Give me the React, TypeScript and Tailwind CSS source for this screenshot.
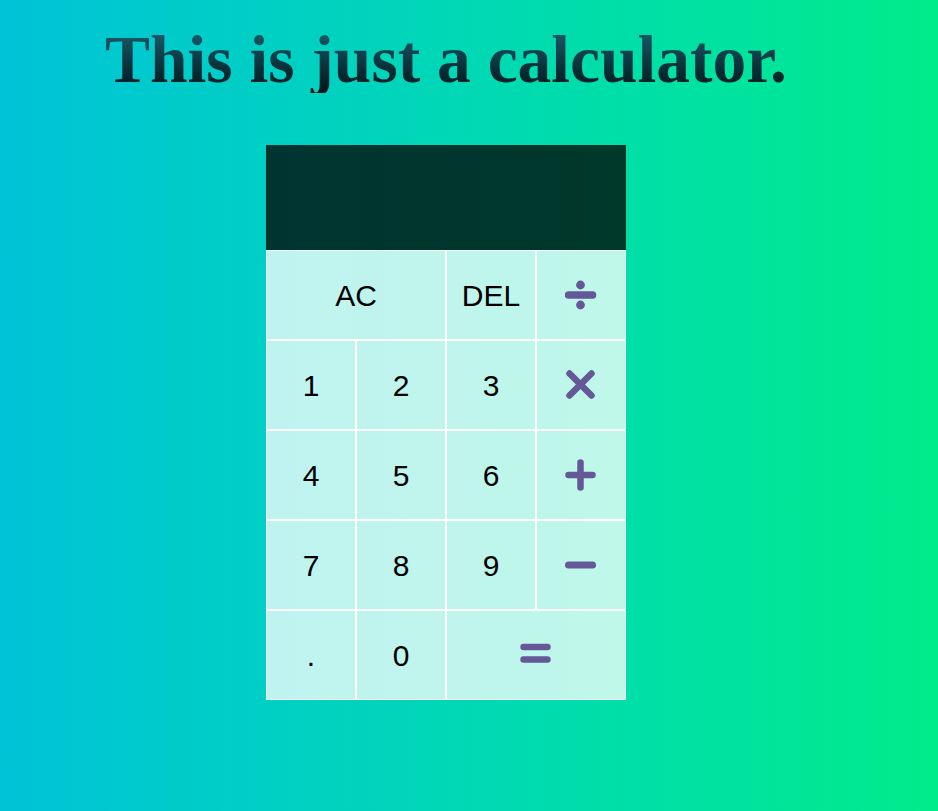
import React from "react";

const ICON = "#655897";

function Divide() {
  return (
    <svg width="32" height="32" viewBox="0 0 32 32">
      <circle cx="15.5" cy="6" r="4.4" fill={ICON} />
      <line x1="3.5" y1="16" x2="27.5" y2="16" stroke={ICON} strokeWidth="7.5" strokeLinecap="round" />
      <circle cx="15.5" cy="26" r="4.4" fill={ICON} />
    </svg>
  );
}
function Times() {
  return (
    <svg width="32" height="32" viewBox="0 0 32 32">
      <line x1="4.5" y1="4.5" x2="26.5" y2="26.5" stroke={ICON} strokeWidth="6.5" strokeLinecap="round" />
      <line x1="26.5" y1="4.5" x2="4.5" y2="26.5" stroke={ICON} strokeWidth="6.5" strokeLinecap="round" />
    </svg>
  );
}
function Plus() {
  return (
    <svg width="32" height="32" viewBox="0 0 32 32">
      <line x1="15.5" y1="3.5" x2="15.5" y2="28.5" stroke={ICON} strokeWidth="6.5" strokeLinecap="round" />
      <line x1="3.5" y1="16" x2="27.5" y2="16" stroke={ICON} strokeWidth="6.5" strokeLinecap="round" />
    </svg>
  );
}
function Minus() {
  return (
    <svg width="32" height="32" viewBox="0 0 32 32">
      <line x1="3.5" y1="16" x2="27.5" y2="16" stroke={ICON} strokeWidth="7" strokeLinecap="round" />
    </svg>
  );
}
function Equals() {
  return (
    <svg width="32" height="32" viewBox="0 0 32 32">
      <line x1="3.5" y1="8" x2="27.5" y2="8" stroke={ICON} strokeWidth="6.4" strokeLinecap="round" />
      <line x1="3.5" y1="20.5" x2="27.5" y2="20.5" stroke={ICON} strokeWidth="6.4" strokeLinecap="round" />
    </svg>
  );
}

function Btn({ children, wide }: { children: React.ReactNode; wide?: boolean }) {
  return (
    <button
      className={
        (wide ? "col-span-2 " : "") +
        "h-[90px] border border-white bg-white/75 flex items-center justify-center text-[30px] text-black cursor-pointer"
      }
      style={{ fontFamily: '"Liberation Sans", Arial, sans-serif' }}
    >
      {children}
    </button>
  );
}

export default function App() {
  return (
    <div className="min-h-[811px] w-full bg-gradient-to-r from-[#00c3d7] to-[#00eb8a]">
      <div className="w-[892px] flex flex-col items-center">
        <h1
          className="mt-[26px] text-[67.5px] leading-[67px] font-bold bg-gradient-to-b from-[#1e6272] to-[#02161b] bg-clip-text text-transparent whitespace-nowrap"
          style={{ fontFamily: '"Liberation Serif", "Times New Roman", serif' }}
        >
          This is just a calculator.
        </h1>
        <div className="mt-[52px] grid grid-cols-[repeat(4,90px)]">
          <div className="col-span-4 h-[105px] bg-black/75"></div>
          <Btn wide>AC</Btn>
          <Btn>DEL</Btn>
          <Btn><Divide /></Btn>
          <Btn>1</Btn>
          <Btn>2</Btn>
          <Btn>3</Btn>
          <Btn><Times /></Btn>
          <Btn>4</Btn>
          <Btn>5</Btn>
          <Btn>6</Btn>
          <Btn><Plus /></Btn>
          <Btn>7</Btn>
          <Btn>8</Btn>
          <Btn>9</Btn>
          <Btn><Minus /></Btn>
          <Btn>.</Btn>
          <Btn>0</Btn>
          <Btn wide><Equals /></Btn>
        </div>
      </div>
    </div>
  );
}
